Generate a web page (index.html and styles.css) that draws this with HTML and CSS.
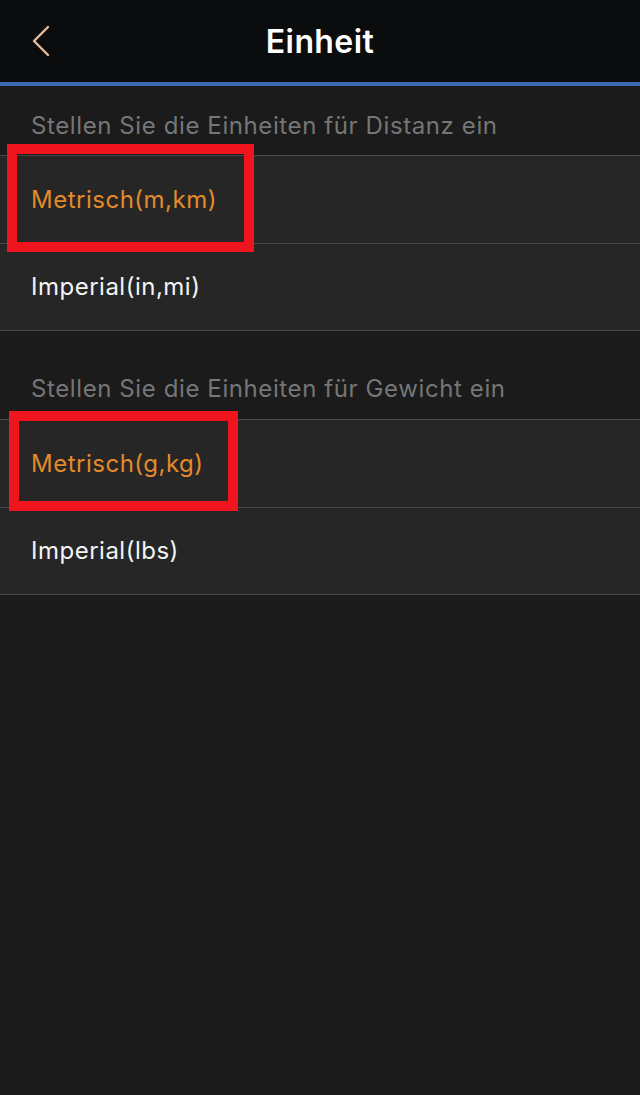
FILE: index.html
```html
<!DOCTYPE html>
<html lang="de">
<head>
    <meta charset="UTF-8">
    <title>Einheit</title>
    <link rel="stylesheet" href="styles.css">
</head>
<body>
    <div class="top-bar">
        <div class="back-btn">
            <svg width="20" height="32" viewBox="0 0 20 32">
                <path d="M17 2 L3 16 L17 30" fill="none" stroke="#e6bd9c" stroke-width="2.4" stroke-linecap="round" stroke-linejoin="round"/>
            </svg>
        </div>
        <h1>Einheit</h1>
    </div>

    <div class="section">
        <div class="section-title">Stellen Sie die Einheiten für Distanz ein</div>
        <div class="option selected"><span class="mark">Metrisch(m,km)</span></div>
        <div class="option">Imperial(in,mi)</div>
    </div>

    <div class="section">
        <div class="section-title">Stellen Sie die Einheiten für Gewicht ein</div>
        <div class="option selected"><span class="mark mark-small">Metrisch(g,kg)</span></div>
        <div class="option">Imperial(lbs)</div>
    </div>
</body>
</html>
```

FILE: styles.css
```css
body {
    margin: 0;
    background: #1b1b1b;
    font-family: Inter, "Noto Sans", sans-serif;
    min-height: 100vh;
}

.top-bar {
    height: 82px;
    background: #0b0c0e;
    border-bottom: 4px solid #3d6ab5;
    display: flex;
    align-items: center;
    justify-content: center;
    position: relative;
}

.back-btn {
    position: absolute;
    left: 31px;
    top: 25px;
}

.top-bar h1 {
    margin: 0;
    color: #fff;
    font-size: 32px;
    font-weight: 600;
    letter-spacing: 0.4px;
}

.section-title {
    height: 69px;
    display: flex;
    align-items: flex-end;
    padding: 0 0 15px 31px;
    box-sizing: border-box;
    color: #767676;
    font-size: 24px;
    letter-spacing: 0.6px;
}

.section + .section .section-title {
    height: 88px;
    padding-bottom: 16px;
}

.option {
    height: 88px;
    display: flex;
    align-items: center;
    padding-left: 31px;
    background: #262626;
    border-top: 1px solid #484848;
    color: #f4f4f4;
    font-size: 24px;
    letter-spacing: 0.5px;
    line-height: 30px;
    box-sizing: border-box;
}

.option:last-child {
    border-bottom: 1px solid #484848;
}

.option.selected {
    color: #e48a2a;
}

.mark {
    position: relative;
    display: inline-block;
}

/* red highlight box drawn over the row */
.mark::before {
    content: "";
    position: absolute;
    left: -24px;
    right: -37px;
    top: -41px;
    bottom: -37px;
    border: 10px solid #f0141e;
}

.mark-small::before {
    left: -22px;
    right: -34px;
    top: -38px;
    bottom: -32px;
}
```
